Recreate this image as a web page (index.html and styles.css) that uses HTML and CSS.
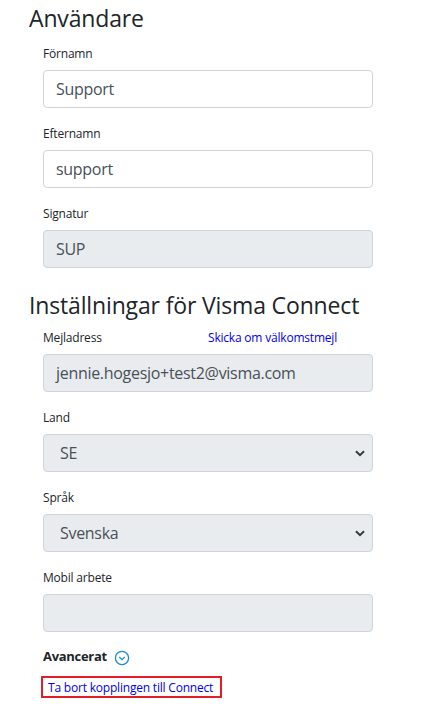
FILE: index.html
```html
<!DOCTYPE html>
<html lang="sv">
<head>
<meta charset="utf-8">
<link rel="stylesheet" href="styles.css">
</head>
<body>
<div class="page">
  <h2 class="title">Användare</h2>
  <div class="group">
    <label class="lbl">Förnamn</label>
    <div class="field">Support</div>
  </div>
  <div class="group">
    <label class="lbl">Efternamn</label>
    <div class="field">support</div>
  </div>
  <div class="group">
    <label class="lbl">Signatur</label>
    <div class="field disabled">SUP</div>
  </div>

  <h2 class="title title2">Inställningar för Visma Connect</h2>
  <div class="group">
    <div class="lblrow">
      <label class="lbl">Mejladress</label>
      <a class="link resend" href="#">Skicka om välkomstmejl</a>
    </div>
    <div class="field disabled">jennie.hogesjo+test2@visma.com</div>
  </div>
  <div class="group">
    <label class="lbl">Land</label>
    <div class="field disabled select"><span>SE</span>
      <svg class="chev" width="10" height="7" viewBox="0 0 10 7"><path d="M1 1.2 L5 5.2 L9 1.2" fill="none" stroke="#343a40" stroke-width="2"/></svg>
    </div>
  </div>
  <div class="group">
    <label class="lbl">Språk</label>
    <div class="field disabled select"><span>Svenska</span>
      <svg class="chev" width="10" height="7" viewBox="0 0 10 7"><path d="M1 1.2 L5 5.2 L9 1.2" fill="none" stroke="#343a40" stroke-width="2"/></svg>
    </div>
  </div>
  <div class="group">
    <label class="lbl">Mobil arbete</label>
    <div class="field disabled"></div>
  </div>

  <div class="adv">
    <span class="advtxt">Avancerat</span>
    <svg class="advicon" width="16" height="16" viewBox="0 0 16 16"><circle cx="8" cy="8" r="6.6" fill="none" stroke="#1b8ad8" stroke-width="1.3"/><path d="M5.3 7 L8 9.6 L10.7 7" fill="none" stroke="#1b8ad8" stroke-width="1.3"/></svg>
  </div>
  <div class="remove"><a class="link" href="#">Ta bort kopplingen till Connect</a></div>
</div>
</body>
</html>
```

FILE: styles.css
```css
* { box-sizing: border-box; }
body {
  margin: 0;
  background: #fff;
  font-family: "Open Sans", "Noto Sans", sans-serif;
  color: #212529;
}
.page {
  padding: 3px 0 0 29px;
}
.title {
  margin: 0 0 13px 0;
  font-size: 23px;
  font-weight: 400;
  line-height: 30px;
  color: #212529;
  letter-spacing: -0.15px;
}
.title2 {
  padding-top: 4px;
  margin-bottom: 10px;
}
.group {
  margin-left: 14px;
  width: 330px;
  margin-bottom: 18px;
}
.lbl {
  display: block;
  font-size: 12px;
  line-height: 16px;
  margin-bottom: 8px;
  letter-spacing: -0.2px;
}
.lblrow {
  display: flex;
  align-items: baseline;
}
.lblrow .lbl { width: 165px; }
.link {
  color: #0000ee;
  text-decoration: none;
  font-size: 12px;
  letter-spacing: -0.2px;
}
.resend { line-height: 16px; }
.field {
  height: 38px;
  border: 1px solid #ced4da;
  border-radius: 4px;
  padding: 0 12px;
  font-size: 16px;
  line-height: 36px;
  color: #495057;
  letter-spacing: -0.3px;
}
.disabled { background: #e9ecef; }
.select {
  display: flex;
  align-items: center;
  justify-content: space-between;
  padding: 0 7px 0 16px;
}
.chev { display: block; }
.adv {
  margin-left: 14px;
  display: flex;
  align-items: center;
  gap: 7px;
  height: 18px;
  margin-top: -3px;
}
.advtxt {
  font-size: 13px;
  font-weight: 700;
  letter-spacing: -0.3px;
}
.advicon { display: block; margin-top: 3px; }
.remove {
  margin-left: 12px;
  margin-top: 11px;
  display: inline-block;
  border: 2px solid #e41e26;
  padding: 0 7px 0 5px;
  line-height: 17px;
}
```
